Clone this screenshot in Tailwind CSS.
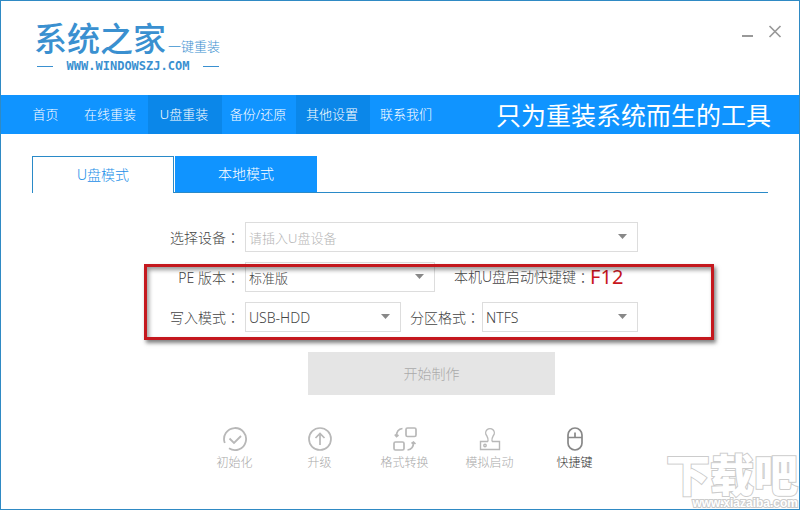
<!doctype html>
<html lang="zh-CN">

<head>
    <meta charset="UTF-8">
    <meta name="viewport" content="width=device-width, initial-scale=1.0">
    <script src="https://cdn.jsdelivr.net/npm/@tailwindcss/browser@4"></script>
    <title>系统之家一键重装</title>
</head>

<body class="bg-white font-['Noto_Sans','Noto_Sans_CJK_SC',sans-serif] font-light text-[#444]">
    <div class="relative min-h-screen border border-[#2f8ac4] overflow-hidden">
        <!-- Title bar -->
        <header class="flex justify-between items-start h-[94px] pl-[33px] pr-[16px]">
            <div class="pt-[18px] w-[188px] text-[#3a90d0]">
                <div class="flex items-baseline whitespace-nowrap">
                    <h1 class="text-[33px] leading-[40px] font-medium">系统之家</h1>
                    <span class="ml-[2px] text-[13px] leading-[20px]">一键重装</span>
                </div>
                <div class="flex items-center justify-between px-[3px] h-[14px]">
                    <span class="w-[16px] h-px bg-[#3a90d0]"></span>
                    <span class="font-['DejaVu_Sans_Mono',monospace] text-[12px] leading-[12px] font-bold">WWW.WINDOWSZJ.COM</span>
                    <span class="w-[16px] h-px bg-[#3a90d0]"></span>
                </div>
            </div>
            <div class="flex pt-[22px] gap-[12px] text-[#999]">
                <button type="button" aria-label="最小化">
                    <svg class="w-[16px] h-[16px]" viewBox="0 0 16 16" fill="none" stroke="currentColor" stroke-width="2"><path d="M3 13H14" /></svg>
                </button>
                <button type="button" aria-label="关闭">
                    <svg class="w-[16px] h-[16px]" viewBox="0 0 16 16" fill="none" stroke="currentColor" stroke-width="1.7"><path d="M2.5 3L13.5 14M13.5 3L2.5 14" /></svg>
                </button>
            </div>
        </header>

        <!-- Navbar -->
        <nav class="flex justify-between items-center h-[39px] bg-[#1094ff] text-white">
            <ul class="flex h-full text-[13px] text-center leading-[38px] whitespace-nowrap">
                <li><a href="#" class="block w-[73px] h-full pl-[16px]">首页</a></li>
                <li><a href="#" class="block w-[74px] h-full pr-[2px]">在线重装</a></li>
                <li><a href="#" class="block w-[74px] h-full pr-[2px] bg-[#0b87e9]">U盘重装</a></li>
                <li><a href="#" class="block w-[74px] h-full pr-[2px]">备份/还原</a></li>
                <li><a href="#" class="block w-[74px] h-full pr-[2px] bg-[#0b87e9]">其他设置</a></li>
                <li><a href="#" class="block w-[74px] h-full pr-[2px]">联系我们</a></li>
            </ul>
            <p class="pr-[28px] text-[25px] leading-[36px] font-normal whitespace-nowrap">只为重装系统而生的工具</p>
        </nav>

        <main class="px-[31px] pt-[22px]">
            <!-- Tabs -->
            <div class="flex gap-px h-[37px] border-b border-[#2a8ac8] text-[14px] leading-[36px]">
                <button type="button" class="w-[142px] h-[37px] bg-white border border-b-0 border-[#2a8ac8] text-[#1a8fe8]">U盘模式</button>
                <button type="button" class="w-[142px] h-[36px] bg-[#1094ff] text-white">本地模式</button>
            </div>

            <form class="w-[476px] mx-auto mt-[29px] text-[14px] leading-[30px] whitespace-nowrap">
                <div class="flex h-[30px]">
                    <label for="device" class="w-[83px] pr-[5px] text-right">选择设备<span class="font-['Noto_Sans_CJK_TC']" lang="zh-TW">：</span></label>
                    <div class="relative flex-1">
                        <select id="device" class="appearance-none block w-full h-[30px] px-[3px] pb-[2px] border border-[#ddd] bg-white text-[13px] text-[#b5b5b5]">
                            <option>请插入U盘设备</option>
                        </select>
                        <svg class="absolute right-[11px] top-[12px] w-[9px] h-[5px] pointer-events-none" viewBox="0 0 9 5" fill="#888"><path d="M0 0H9L4.5 5Z" /></svg>
                    </div>
                </div>

                <div class="relative flex flex-col gap-[10px] mt-[10px]">
                    <div class="flex h-[30px]">
                        <label for="pe" class="w-[83px] pr-[5px] text-right">PE 版本<span class="font-['Noto_Sans_CJK_TC']" lang="zh-TW">：</span></label>
                        <div class="relative w-[190px]">
                            <select id="pe" class="appearance-none block w-full h-[30px] px-[3px] pb-[2px] border border-[#ddd] bg-white text-[13px]">
                                <option>标准版</option>
                            </select>
                            <svg class="absolute right-[11px] top-[12px] w-[9px] h-[5px] pointer-events-none" viewBox="0 0 9 5" fill="#888"><path d="M0 0H9L4.5 5Z" /></svg>
                        </div>
                        <p class="flex ml-[19px]">本机U盘启动快捷键<span class="font-['Noto_Sans_CJK_TC']" lang="zh-TW">：</span><span class="text-[20px] text-[#c8161d] font-normal">F12</span></p>
                    </div>
                    <div class="flex h-[30px]">
                        <label for="mode" class="w-[83px] pr-[5px] text-right">写入模式<span class="font-['Noto_Sans_CJK_TC']" lang="zh-TW">：</span></label>
                        <div class="relative w-[156px]">
                            <select id="mode" class="appearance-none block w-full h-[30px] px-[3px] pb-[2px] border border-[#ddd] bg-white text-[14px]">
                                <option>USB-HDD</option>
                            </select>
                            <svg class="absolute right-[11px] top-[12px] w-[9px] h-[5px] pointer-events-none" viewBox="0 0 9 5" fill="#888"><path d="M0 0H9L4.5 5Z" /></svg>
                        </div>
                        <label for="format" class="w-[81px] pr-[2px] text-right">分区格式<span class="font-['Noto_Sans_CJK_TC']" lang="zh-TW">：</span></label>
                        <div class="relative flex-1">
                            <select id="format" class="appearance-none block w-full h-[30px] px-[3px] pb-[2px] border border-[#ddd] bg-white text-[14px]">
                                <option>NTFS</option>
                            </select>
                            <svg class="absolute right-[11px] top-[12px] w-[9px] h-[5px] pointer-events-none" viewBox="0 0 9 5" fill="#888"><path d="M0 0H9L4.5 5Z" /></svg>
                        </div>
                    </div>
                    <!-- Highlight frame -->
                    <div class="absolute top-[2px] -bottom-[8px] -left-[18px] -right-[76px] border-3 border-[#c4181e] shadow-[2px_3px_4px_rgba(0,0,0,0.5),inset_2px_3px_4px_rgba(0,0,0,0.4)] pointer-events-none"></div>
                </div>

                <button type="button" disabled class="block w-[247px] h-[43px] ml-[146px] mt-[20px] bg-[#e5e5e5] text-[#aaa]">开始制作</button>
            </form>

            <!-- Tools -->
            <div class="w-[476px] mx-auto pl-[30px] mt-[32px] flex text-[12px] leading-[18px] text-[#aaa]">
                <button type="button" class="w-[85px] flex flex-col items-center gap-[3px]">
                    <svg class="w-[24px] h-[24px]" viewBox="0 0 24 24" fill="none" stroke="#b8b8b8" stroke-width="1.8"><path d="M1.800 16A11 11 0 1 1 6 21.200" /><path d="M6.5 11.5L11 16L18 9" /></svg>
                    初始化
                </button>
                <button type="button" class="w-[85px] flex flex-col items-center gap-[3px]">
                    <svg class="w-[24px] h-[24px]" viewBox="0 0 24 24" fill="none" stroke="#b8b8b8" stroke-width="1.7"><circle cx="12" cy="12" r="11" /><path d="M12 18V6.5M7.5 11L12 6.5L16.5 11" /></svg>
                    升级
                </button>
                <button type="button" class="w-[85px] flex flex-col items-center gap-[3px]">
                    <svg class="w-[24px] h-[24px]" viewBox="0 0 24 24" fill="none" stroke="#b8b8b8" stroke-width="1.7"><rect x="13" y="1" width="10" height="8.500" rx="1.500" /><rect x="1" y="15" width="10" height="8" rx="1.500" /><path d="M9.500 1.500C5.500 2 3.500 4.500 3.500 9M1.800 7.500L3.500 9.500L5.500 8" /><path d="M14.500 23C18.500 22.500 20.500 20 20.500 15.500M18.500 16.500L20.500 15L22.500 17" /></svg>
                    格式转换
                </button>
                <button type="button" class="w-[85px] flex flex-col items-center gap-[3px]">
                    <svg class="w-[24px] h-[24px]" viewBox="0 0 24 24" fill="none" stroke="#b8b8b8" stroke-width="1.4"><path d="M10 14.500C10.300 12 10 10.500 8.800 8.800A4.300 4.300 0 1 1 15.200 8.800C14 10.500 13.700 12 14 14.500" /><path d="M10 14.500H2.500V22.500H21.500V14.500H14" /><circle cx="7" cy="18.500" r="1.200" /></svg>
                    模拟启动
                </button>
                <button type="button" class="w-[85px] flex flex-col items-center gap-[3px] text-[#333]">
                    <svg class="w-[24px] h-[24px]" viewBox="0 0 24 24" fill="none" stroke="#888" stroke-width="1.7"><rect x="5" y="1" width="14" height="22" rx="7" /><path d="M5 10.500H19M12 5.500V10.500" /></svg>
                    快捷键
                </button>
            </div>
        </main>

        <!-- Watermark -->
        <div class="absolute right-[1px] bottom-0 text-white text-right whitespace-nowrap pointer-events-none">
            <p class="text-[44px] leading-[44px] font-black [-webkit-text-stroke:2px_#ccc] [paint-order:stroke_fill]">下载吧</p>
            <p class="text-[12px] leading-[12px] font-bold font-['Liberation_Sans',sans-serif] [-webkit-text-stroke:2px_#ccc] [paint-order:stroke_fill]">www.xiazaiba.com</p>
        </div>
    </div>
</body>

</html>
